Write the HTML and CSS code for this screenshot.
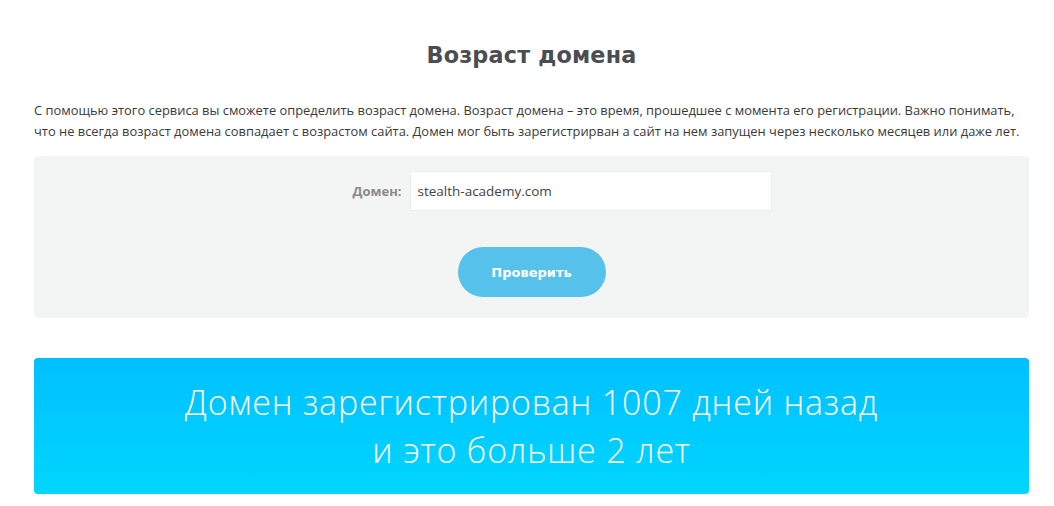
FILE: index.html
```html
<!DOCTYPE html>
<html lang="ru">
<head>
<meta charset="utf-8">
<link rel="stylesheet" href="styles.css">
</head>
<body>
<main class="page">
  <h1 class="title">Возраст домена</h1>
  <p class="intro">С помощью этого сервиса вы сможете определить возраст домена. Возраст домена – это время, прошедшее с момента его регистрации. Важно понимать, что не всегда возраст домена совпадает с возрастом сайта. Домен мог быть зарегистрирван а сайт на нем запущен через несколько месяцев или даже лет.</p>
  <form class="panel">
    <div class="field">
      <label class="label" for="d">Домен:</label>
      <input class="input" id="d" type="text" value="stealth-academy.com">
    </div>
    <button class="btn" type="button">Проверить</button>
  </form>
  <div class="result">
    <div class="result-text">Домен зарегистрирован 1007 дней назад<br>и это больше 2 лет</div>
  </div>
</main>
</body>
</html>
```
FILE: styles.css
```css
* { box-sizing: border-box; }
html, body { margin: 0; padding: 0; background: #fff; }
body { font-family: "Open Sans", "DejaVu Sans", sans-serif; }
.page { width: 995px; margin: 0 0 0 34px; padding-top: 38px; }
.title {
  margin: 0;
  text-align: center;
  font-family: "DejaVu Sans", sans-serif;
  font-weight: 700;
  font-size: 22.3px;
  line-height: 34px;
  color: #4a4d52;
  letter-spacing: 0.2px;
}
.intro {
  margin: 28px 0 0;
  font-size: 12.9px;
  line-height: 21px;
  color: #3a3a3a;
}
.panel {
  margin-top: 14px;
  height: 162px;
  background: #f3f4f4;
  border-radius: 4px;
  padding-top: 15px;
  display: flex;
  flex-direction: column;
  align-items: center;
}
.field { display: flex; align-items: center; gap: 9px; margin-left: 62px; }
.label { font-weight: 700; font-size: 13px; color: #8a8a8a; }
.input {
  width: 362px; height: 40px;
  border: 1px solid #eceded;
  background: #fff;
  padding: 0 6px;
  font-family: "Open Sans", sans-serif;
  font-size: 13.5px;
  color: #444;
  outline: none;
}
.btn {
  margin-top: 36px;
  width: 148px; height: 50px;
  border: 0; border-radius: 25px;
  background: #56c1eb;
  color: #fff;
  font-family: "DejaVu Sans", sans-serif;
  font-weight: 700;
  font-size: 13px;
}
.result {
  margin-top: 40px;
  height: 136px;
  border-radius: 4px;
  background: linear-gradient(180deg, #00c0ff 0%, #00d6ff 100%);
  display: flex; align-items: center; justify-content: center;
}
.result-text {
  text-align: center;
  color: #fff;
  font-family: "Open Sans", sans-serif;
  font-weight: 300;
  font-size: 34px;
  letter-spacing: 0.8px;
  line-height: 48px;
}
```
